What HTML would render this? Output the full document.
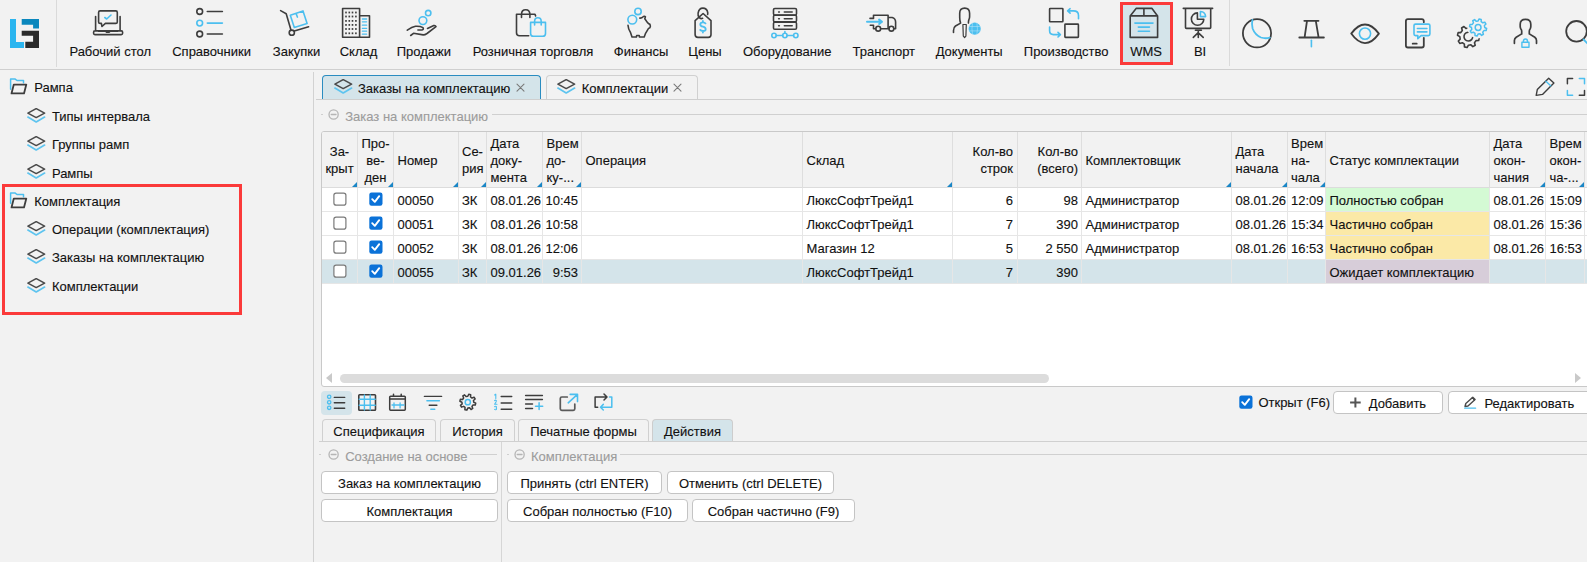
<!DOCTYPE html>
<html><head><meta charset="utf-8"><title>WMS</title>
<style>
html,body{margin:0;padding:0}
body{width:1587px;height:562px;overflow:hidden;background:#f2f2f2;font-family:"Liberation Sans",sans-serif;font-size:13px;color:#111;position:relative}
.a{position:absolute}
.t{position:absolute;white-space:nowrap;line-height:15px;-webkit-text-stroke:0.12px currentColor}
.c{text-align:center}
.r{text-align:right}
.g{color:#9c9c9c}
</style></head><body>

<div class="a" style="left:0px;top:69px;width:1587px;height:1px;background:#cfcfcf"></div>
<div class="a" style="left:56px;top:0px;width:1px;height:67px;background:#dadada"></div>
<div class="a" style="left:1229px;top:0px;width:1px;height:66px;background:#dadada"></div>
<svg class="a" style="left:10px;top:19px" width="29" height="29" viewBox="0 0 29 29">
<path d="M0 0H6V23H14V29H0Z" fill="#2bb5ef"/>
<path d="M11.7 0H29V9.6H23.1V5.7H11.7Z" fill="#0a87bd"/>
<path d="M11.7 11.7H29V29H15.3V22.8H23.1V16.7H11.7Z" fill="#2b2b2b"/>
</svg>
<div class="a" style="left:1120px;top:2px;width:53px;height:63px;background:#d4e4ea;border:3px solid #fb3a3a;box-sizing:border-box"></div>
<div class="t c " style="left:-39.8px;top:43.5px;width:300px;">Рабочий стол</div>
<div class="t c " style="left:61.599999999999994px;top:43.5px;width:300px;">Справочники</div>
<div class="t c " style="left:146.5px;top:43.5px;width:300px;">Закупки</div>
<div class="t c " style="left:208.5px;top:43.5px;width:300px;">Склад</div>
<div class="t c " style="left:273.8px;top:43.5px;width:300px;">Продажи</div>
<div class="t c " style="left:383px;top:43.5px;width:300px;">Розничная торговля</div>
<div class="t c " style="left:491.1px;top:43.5px;width:300px;">Финансы</div>
<div class="t c " style="left:555px;top:43.5px;width:300px;">Цены</div>
<div class="t c " style="left:637.2px;top:43.5px;width:300px;">Оборудование</div>
<div class="t c " style="left:733.8px;top:43.5px;width:300px;">Транспорт</div>
<div class="t c " style="left:819.2px;top:43.5px;width:300px;">Документы</div>
<div class="t c " style="left:916.2px;top:43.5px;width:300px;">Производство</div>
<div class="t c " style="left:996.0999999999999px;top:43.5px;width:300px;">WMS</div>
<div class="t c " style="left:1050.1px;top:43.5px;width:300px;">BI</div>
<svg class="a" style="left:88px;top:5px" width="40" height="35" viewBox="0 0 40 35" fill="none" stroke-linecap="round" stroke-linejoin="round"><path stroke="#3d3d3d" stroke-width="1.6" d="M12.1 5.9H27.8Q29.3 5.9 29.3 7.4V16.9Q29.3 18.4 27.8 18.4H17.4L14 21.5L13.4 18.4H12.1Q10.6 18.4 10.6 16.9V7.4Q10.6 5.9 12.1 5.9Z"/>
<path stroke="#4cbfef" stroke-width="1.6" d="M16.8 12.5L18.7 14L23 10"/>
<path stroke="#3d3d3d" stroke-width="1.6" d="M7.6 11.5V25.9M32.1 11.5V25.9M6.8 25.9H33.4Q34.6 25.9 34.6 27.2V28.3Q34.6 29.6 33.2 29.6H6.9Q5.6 29.6 5.6 28.3V27.2Q5.6 25.9 6.8 25.9ZM10.3 26.2H17.5L18.6 27.3H21.1L22.2 26.2H29.9" /></svg>
<svg class="a" style="left:190px;top:5px" width="40" height="35" viewBox="0 0 40 35" fill="none" stroke-linecap="round" stroke-linejoin="round"><circle cx="9.7" cy="6.5" r="2.9" stroke="#3d3d3d" stroke-width="1.6"/><circle cx="9.7" cy="18.1" r="2.9" stroke="#4cbfef" stroke-width="1.6"/><circle cx="9.7" cy="29" r="2.9" stroke="#3d3d3d" stroke-width="1.6"/>
<path stroke="#3d3d3d" stroke-width="1.6" d="M17.3 6.5H32.4M17.3 29H32.4"/><path stroke="#4cbfef" stroke-width="1.6" d="M17.3 18.1H32.4"/></svg>
<svg class="a" style="left:275px;top:5px" width="40" height="35" viewBox="0 0 40 35" fill="none" stroke-linecap="round" stroke-linejoin="round"><path stroke="#3d3d3d" stroke-width="1.6" d="M5.6 5.6L11.2 8.7L15.9 24.8M19.3 25.9L33.6 21.8"/><circle cx="16.8" cy="27.7" r="2.6" stroke="#3d3d3d" stroke-width="1.6"/>
<path stroke="#4cbfef" stroke-width="1.6" d="M15.3 10.3L28 5.9L32.1 18.4L19.3 22.4ZM21.2 8.7L22.4 12.1"/></svg>
<svg class="a" style="left:336px;top:5px" width="40" height="35" viewBox="0 0 40 35" fill="none" stroke-linecap="round" stroke-linejoin="round"><path stroke="#3d3d3d" stroke-width="1.6" stroke-width="1.8" d="M6.6 32.3V3.5H23.6V32.3ZM23.6 10.7H33.5V32.3H23.6"/><rect x="9.2" y="6.6" width="1.6" height="1.8" fill="#3d3d3d"/><rect x="9.2" y="10.6" width="1.6" height="1.8" fill="#3d3d3d"/><rect x="9.2" y="15.0" width="1.6" height="1.8" fill="#3d3d3d"/><rect x="9.2" y="19.0" width="1.6" height="1.8" fill="#3d3d3d"/><rect x="9.2" y="23.1" width="1.6" height="1.8" fill="#3d3d3d"/><rect x="9.2" y="27.400000000000002" width="1.6" height="1.8" fill="#3d3d3d"/><rect x="12.5" y="6.6" width="1.6" height="1.8" fill="#3d3d3d"/><rect x="12.5" y="10.6" width="1.6" height="1.8" fill="#3d3d3d"/><rect x="12.5" y="15.0" width="1.6" height="1.8" fill="#3d3d3d"/><rect x="12.5" y="19.0" width="1.6" height="1.8" fill="#3d3d3d"/><rect x="12.5" y="23.1" width="1.6" height="1.8" fill="#3d3d3d"/><rect x="12.5" y="27.400000000000002" width="1.6" height="1.8" fill="#3d3d3d"/><rect x="15.7" y="6.6" width="1.6" height="1.8" fill="#3d3d3d"/><rect x="15.7" y="10.6" width="1.6" height="1.8" fill="#3d3d3d"/><rect x="15.7" y="15.0" width="1.6" height="1.8" fill="#3d3d3d"/><rect x="15.7" y="19.0" width="1.6" height="1.8" fill="#3d3d3d"/><rect x="15.7" y="23.1" width="1.6" height="1.8" fill="#3d3d3d"/><rect x="15.7" y="27.400000000000002" width="1.6" height="1.8" fill="#3d3d3d"/><rect x="19.099999999999998" y="6.6" width="1.6" height="1.8" fill="#3d3d3d"/><rect x="19.099999999999998" y="10.6" width="1.6" height="1.8" fill="#3d3d3d"/><rect x="19.099999999999998" y="15.0" width="1.6" height="1.8" fill="#3d3d3d"/><rect x="19.099999999999998" y="19.0" width="1.6" height="1.8" fill="#3d3d3d"/><rect x="19.099999999999998" y="23.1" width="1.6" height="1.8" fill="#3d3d3d"/><rect x="19.099999999999998" y="27.400000000000002" width="1.6" height="1.8" fill="#3d3d3d"/><path stroke="#4cbfef" stroke-width="1.3" d="M26.4 14H30.6"/><path stroke="#4cbfef" stroke-width="1.3" d="M26.4 16.8H30.6"/><path stroke="#4cbfef" stroke-width="1.3" d="M26.4 20.2H30.6"/><path stroke="#4cbfef" stroke-width="1.3" d="M26.4 23.4H30.6"/><path stroke="#4cbfef" stroke-width="1.3" d="M26.4 26.2H30.6"/><path stroke="#4cbfef" stroke-width="1.3" d="M26.4 29.2H30.6"/></svg>
<svg class="a" style="left:402px;top:5px" width="40" height="35" viewBox="0 0 40 35" fill="none" stroke-linecap="round" stroke-linejoin="round"><circle cx="20.9" cy="15.6" r="3.9" stroke="#4cbfef" stroke-width="1.6"/><circle cx="26.2" cy="8.1" r="2.7" stroke="#4cbfef" stroke-width="1.6"/>
<path stroke="#3d3d3d" stroke-width="1.6" d="M5.3 25.2Q10 22 13.5 21.3Q18 21 21 22.6Q22 24.5 20 25H15.9M8.7 30.5L11.5 28.3L21.2 29.9Q23 29.9 25 28.5L34 21.6Q33.5 20.2 31.8 20.5L25.5 23.4"/></svg>
<svg class="a" style="left:510px;top:5px" width="40" height="35" viewBox="0 0 40 35" fill="none" stroke-linecap="round" stroke-linejoin="round"><path stroke="#3d3d3d" stroke-width="1.6" d="M18.7 30.8H9.5Q6.5 30.8 6.5 27.8V9.3H25L25.6 10.9M11.5 12.5V9.5Q11.5 4.7 15.7 4.7Q19.9 4.7 19.9 9.5V12.5"/>
<path stroke="#4cbfef" stroke-width="1.6" d="M20.6 17.4H35.5V28.4Q35.5 31.2 32.7 31.2H23.4Q20.6 31.2 20.6 28.4ZM24.6 20V16.4Q24.6 12.8 27.9 12.8Q31.2 12.8 31.2 16.4V20"/></svg>
<svg class="a" style="left:618px;top:5px" width="40" height="35" viewBox="0 0 40 35" fill="none" stroke-linecap="round" stroke-linejoin="round"><circle cx="14.3" cy="14.6" r="4.4" stroke="#4cbfef" stroke-width="1.6"/><circle cx="20" cy="6.4" r="3.2" stroke="#4cbfef" stroke-width="1.6"/>
<path stroke="#3d3d3d" stroke-width="1.6" d="M10 20.2Q10.3 24.5 12.5 27.4L14 32H18.4L18.7 30.5H21.2L21.5 32H26.2L27.4 28.7L30.4 23.6Q32.4 23 32.4 21.2Q32.4 19 30.6 18.6L29.3 17.4L26.8 13.7L27.4 11.8Q26.8 11 25.5 11.5Q23.6 13.3 21.8 13.1"/></svg>
<svg class="a" style="left:683px;top:5px" width="40" height="35" viewBox="0 0 40 35" fill="none" stroke-linecap="round" stroke-linejoin="round"><path stroke="#3d3d3d" stroke-width="1.6" d="M12.1 15.6V29.3Q12.1 32.4 15 32.4H25.3Q28 32.4 28 29.6V15.6L20.1 8.5Z"/>
<path stroke="#3d3d3d" stroke-width="1.6" d="M16.3 12.6Q14.6 10.8 15.1 8.1Q15.9 3.1 19.9 3.1Q23.9 3.1 24.7 7.5Q24.9 8.6 24.6 9.4M16 12Q17.4 14.4 19.6 13.3"/>
<path stroke="#4cbfef" stroke-width="1.8" d="M22.5 18.4Q21.8 17.3 20 17.3Q17.3 17.3 17.3 19.4Q17.3 21.1 20 21.7Q22.7 22.3 22.7 24.2Q22.7 26 20 26Q18 26 17.2 24.9M19.9 16V17.2M19.9 26.1V27.5"/></svg>
<svg class="a" style="left:765px;top:5px" width="40" height="35" viewBox="0 0 40 35" fill="none" stroke-linecap="round" stroke-linejoin="round"><rect x="8.5" y="3.5" width="23" height="6.6" rx="1.3" stroke="#3d3d3d" stroke-width="1.6"/><rect x="8.5" y="10.3" width="23" height="6.6" rx="1.3" stroke="#3d3d3d" stroke-width="1.6"/><rect x="8.5" y="17.3" width="23" height="7" rx="1.3" stroke="#3d3d3d" stroke-width="1.6"/>
<path stroke="#3d3d3d" stroke-width="1.5" d="M13.6 6.9H14.4M19.3 6.9H27.2M13.6 13.7H14.4M19.3 13.7H27.2M13.6 20.7H14.4M19.3 20.7H27.2"/>
<path stroke="#4cbfef" stroke-width="1.6" d="M19.9 26.5V28.3M11.3 30.5H17.7M22.1 30.5H28.5"/><circle cx="9" cy="30.5" r="2.2" stroke="#4cbfef" stroke-width="1.6"/><circle cx="19.9" cy="30.5" r="2.2" stroke="#4cbfef" stroke-width="1.6"/><circle cx="30.8" cy="30.5" r="2.2" stroke="#4cbfef" stroke-width="1.6"/></svg>
<svg class="a" style="left:861px;top:5px" width="40" height="35" viewBox="0 0 40 35" fill="none" stroke-linecap="round" stroke-linejoin="round"><path stroke="#3d3d3d" stroke-width="1.6" d="M9 13.4H12.5V10.3H27.1V23.7H20M9.3 20.2H12.5V23.7H14.6M27.1 12.5H31.2Q34.6 13.5 34.6 17V23.7H33M27.1 23.7H28"/>
<circle cx="17.2" cy="23.7" r="2.4" stroke="#3d3d3d" stroke-width="1.6"/><circle cx="30.4" cy="23.7" r="2.4" stroke="#3d3d3d" stroke-width="1.6"/>
<path stroke="#4cbfef" stroke-width="2" d="M6 16.8H20.2M18.1 14.6L21 16.8L18.1 19"/></svg>
<svg class="a" style="left:946px;top:5px" width="40" height="35" viewBox="0 0 40 35" fill="none" stroke-linecap="round" stroke-linejoin="round"><path stroke="#3d3d3d" stroke-width="1.6" d="M14.6 18.1Q13.7 16 13.7 12.5V8.3Q13.7 3.1 18.7 3.1Q23.6 3.1 23.6 8.3V11.8Q23.6 13.2 23 14.3Q22.4 15.5 22.4 18.1M14.6 18.1L9.5 21Q7.5 22.5 7.5 25.5V27.4"/>
<path stroke="#3d3d3d" stroke-width="1.2" d="M16.9 19.5H20.3L19.9 31.1L18.6 32.5L17.3 31.1Z"/>
<circle cx="28.7" cy="23.7" r="6.1" fill="#4cbfef"/><path stroke="#bfe7f9" stroke-width="0.5" d="M23 21.5H34.4M23 25.9H34.4M26.5 18Q25.3 23.7 26.5 29.4M30.9 18Q32.1 23.7 30.9 29.4"/></svg>
<svg class="a" style="left:1043px;top:5px" width="40" height="35" viewBox="0 0 40 35" fill="none" stroke-linecap="round" stroke-linejoin="round"><rect x="6.6" y="3.5" width="13.3" height="13.3" rx="0.6" stroke="#3d3d3d" stroke-width="1.6"/><rect x="21.9" y="19.1" width="13.5" height="13.3" rx="0.6" stroke="#3d3d3d" stroke-width="1.6" stroke-width="1.8"/>
<path stroke="#4cbfef" stroke-width="1.6" d="M35.5 13.7V10.4Q35.5 5.9 30.5 5.9H24.8M27.1 3.7L24.6 5.9L27.1 8.1M6.6 22.1V25.8Q6.6 29.6 10.5 29.6H17.2M15 27.4L17.4 29.6L15 32"/></svg>
<svg class="a" style="left:1124px;top:5px" width="40" height="35" viewBox="0 0 40 35" fill="none" stroke-linecap="round" stroke-linejoin="round"><path stroke="#3d3d3d" stroke-width="1.6" stroke-width="1.8" d="M6.2 10.9V32.4H33.6V10.9L28 3.4H12.1ZM6.2 10.9H33.6M19.9 3.4V10.9"/>
<path stroke="#4cbfef" stroke-width="1.6" stroke-width="1.5" d="M10.9 18.1H29M14.3 22.1H25.5M14.3 26.2H25.5"/></svg>
<svg class="a" style="left:1178px;top:5px" width="40" height="35" viewBox="0 0 40 35" fill="none" stroke-linecap="round" stroke-linejoin="round"><path stroke="#3d3d3d" stroke-width="1.6" d="M5.3 3.4H34.6M7.5 3.4V22.5Q7.5 23.4 8.4 23.4H31.8Q32.7 23.4 32.7 22.5V3.4M17.4 25.3H23.4M20.3 25.3V32.4M15.3 32.4L20.2 27.7L25.2 32.4"/>
<path stroke="#3d3d3d" stroke-width="1.6" stroke-width="1.4" d="M19.4 7.9A6.2 6.2 0 1 0 25.8 14.2H19.4Z"/>
<path stroke="#4cbfef" stroke-width="1.6" stroke-width="1.4" d="M22.4 6.5Q27.4 6.8 27.6 11.6H22.4Z"/></svg>
<svg class="a" style="left:1236px;top:14px" width="100" height="38" viewBox="0 0 100 38" fill="none" stroke-linecap="round" stroke-linejoin="round"><circle cx="21" cy="19.3" r="14.1" stroke="#3d3d3d" stroke-width="1.8"/>
<path stroke="#4cbfef" stroke-width="1.8" d="M16.4 6Q15.5 10 16.6 14.5Q19 21 25 23.5Q29.5 25 33.8 23.6"/>
<path stroke="#3d3d3d" stroke-width="1.8" d="M68.3 6.8H82.5M71 6.8L68.6 23.3M79.8 6.8L82.6 23.3M63.3 23.5H87.9"/>
<path stroke="#4cbfef" stroke-width="1.6" d="M75.4 26.3V32.8"/></svg>
<svg class="a" style="left:1340px;top:14px" width="100" height="38" viewBox="0 0 100 38" fill="none" stroke-linecap="round" stroke-linejoin="round"><path stroke="#3d3d3d" stroke-width="1.8" d="M11.2 19.6Q18 10.5 25 10.5Q32 10.5 38.9 19.6Q32 29.1 25 29.1Q18 29.1 11.2 19.6Z"/>
<circle cx="25" cy="19.6" r="5.6" stroke="#4cbfef" stroke-width="1.6"/>
<path stroke="#3d3d3d" stroke-width="1.8" d="M83.8 8.2V7.1Q83.8 5.1 81.8 5.1H67.9Q65.9 5.1 65.9 7.1V31.5Q65.9 33.5 67.9 33.5H81.8Q83.8 33.5 83.8 31.5V23.8M72.7 29.7H76.7"/>
<path stroke="#4cbfef" stroke-width="1.6" d="M75.5 10.1H88.4Q89.9 10.1 89.9 11.6V20.1Q89.9 21.6 88.4 21.6H81.1L77.8 24.7V21.6H75.5Q74 21.6 74 20.1V11.6Q74 10.1 75.5 10.1ZM77.4 14.5H86.9M77.4 17.9H86.9"/></svg>
<svg class="a" style="left:1450px;top:14px" width="137" height="38" viewBox="0 0 137 38" fill="none" stroke-linecap="round" stroke-linejoin="round"><path stroke="#3d3d3d" stroke-width="1.6" d="M27.00 22.60 L29.32 23.89 L28.66 26.57 L26.00 26.62 L24.48 28.68 L25.21 31.24 L22.85 32.66 L20.93 30.82 L18.40 31.20 L17.11 33.52 L14.43 32.86 L14.38 30.20 L12.32 28.68 L9.76 29.41 L8.34 27.05 L10.18 25.13 L9.80 22.60 L7.48 21.31 L8.14 18.63 L10.80 18.58 L12.32 16.52 L11.59 13.96 L13.95 12.54 L15.87 14.38 L18.40 14.00 L19.69 11.68 L22.37 12.34 L22.42 15.00 L24.48 16.52 L27.04 15.79 L28.46 18.15 L26.62 20.07Z"/>
<path stroke="#3d3d3d" stroke-width="1.6" d="M22.78 22.22A4.4 4.4 0 1 1 19.54 18.35"/>
<circle cx="28.1" cy="13.5" r="10.8" fill="#f2f2f2"/>
<path stroke="#4cbfef" stroke-width="1.5" d="M34.70 13.50 L36.64 14.51 L36.12 16.60 L33.93 16.59 L32.77 18.17 L33.42 20.25 L31.58 21.37 L30.04 19.81 L28.10 20.10 L27.09 22.04 L25.00 21.52 L25.01 19.33 L23.43 18.17 L21.35 18.82 L20.23 16.98 L21.79 15.44 L21.50 13.50 L19.56 12.49 L20.08 10.40 L22.27 10.41 L23.43 8.83 L22.78 6.75 L24.62 5.63 L26.16 7.19 L28.10 6.90 L29.11 4.96 L31.20 5.48 L31.19 7.67 L32.77 8.83 L34.85 8.18 L35.97 10.02 L34.41 11.56Z"/><circle cx="28.1" cy="13.5" r="2.9" stroke="#4cbfef" stroke-width="1.5"/>
<path stroke="#3d3d3d" stroke-width="1.7" d="M71.7 19.9V17.2Q71.7 16 70.9 15Q70.2 14 70.2 12.6V10.2Q70.2 5.3 75.5 5.3Q80.8 5.3 80.8 10.2V12.6Q80.8 14 80.1 15Q79.3 16 79.3 17.2V19.9L84.8 23.3Q86.5 24.6 86.5 26.5V29.3M71.7 19.9L66.2 23.3Q64.4 24.6 64.4 26.5V29.3"/>
<path stroke="#4cbfef" stroke-width="1.4" d="M71.9 28.3H79V33.2H71.9ZM73.4 28.3V27.2Q73.4 25 75.45 25Q77.5 25 77.5 27.2V28.3"/>
<circle cx="126.5" cy="17.3" r="10.3" stroke="#3d3d3d" stroke-width="1.8"/>
<path stroke="#4cbfef" stroke-width="1.8" d="M133.6 25.5L140 32"/></svg>
<div class="t " style="left:34.2px;top:79.8px;">Рампа</div>
<svg class="a" style="left:5px;top:74px" width="26" height="22" viewBox="0 0 26 22" fill="none" stroke-linecap="round" stroke-linejoin="round"><path stroke="#4cbfef" stroke-width="1.5" d="M5.6 15.3V5.1H10.2L12 6.5H18.5V8.8"/>
<path stroke="#3d3d3d" stroke-width="1.8" d="M8.8 10.6H21.3L19 19.4H6.5Z" fill="#f2f2f2"/></svg>
<div class="t " style="left:51.9px;top:108.8px;">Типы интервала</div>
<svg class="a" style="left:26.8px;top:107.8px" width="20" height="16" viewBox="0 0 20 16" fill="none" stroke-linecap="round" stroke-linejoin="round"><path stroke="#4a4a4a" stroke-width="1.5" d="M0.9 5.1L9.2 0.6L17.6 5.1L9.2 9.6Z"/>
<path stroke="#5ec4ef" stroke-width="1.7" d="M0.9 9.1L9.2 14L17.6 9.1"/></svg>
<div class="t " style="left:51.9px;top:137.1px;">Группы рамп</div>
<svg class="a" style="left:26.8px;top:136.13px" width="20" height="16" viewBox="0 0 20 16" fill="none" stroke-linecap="round" stroke-linejoin="round"><path stroke="#4a4a4a" stroke-width="1.5" d="M0.9 5.1L9.2 0.6L17.6 5.1L9.2 9.6Z"/>
<path stroke="#5ec4ef" stroke-width="1.7" d="M0.9 9.1L9.2 14L17.6 9.1"/></svg>
<div class="t " style="left:51.9px;top:165.5px;">Рампы</div>
<svg class="a" style="left:26.8px;top:164.45999999999998px" width="20" height="16" viewBox="0 0 20 16" fill="none" stroke-linecap="round" stroke-linejoin="round"><path stroke="#4a4a4a" stroke-width="1.5" d="M0.9 5.1L9.2 0.6L17.6 5.1L9.2 9.6Z"/>
<path stroke="#5ec4ef" stroke-width="1.7" d="M0.9 9.1L9.2 14L17.6 9.1"/></svg>
<div class="t " style="left:34.2px;top:193.8px;">Комплектация</div>
<svg class="a" style="left:5px;top:188px" width="26" height="22" viewBox="0 0 26 22" fill="none" stroke-linecap="round" stroke-linejoin="round"><path stroke="#4cbfef" stroke-width="1.5" d="M5.6 15.3V5.1H10.2L12 6.5H18.5V8.8"/>
<path stroke="#3d3d3d" stroke-width="1.8" d="M8.8 10.6H21.3L19 19.4H6.5Z" fill="#f2f2f2"/></svg>
<div class="t " style="left:51.9px;top:222.1px;">Операции (комплектация)</div>
<svg class="a" style="left:26.8px;top:221.12px" width="20" height="16" viewBox="0 0 20 16" fill="none" stroke-linecap="round" stroke-linejoin="round"><path stroke="#4a4a4a" stroke-width="1.5" d="M0.9 5.1L9.2 0.6L17.6 5.1L9.2 9.6Z"/>
<path stroke="#5ec4ef" stroke-width="1.7" d="M0.9 9.1L9.2 14L17.6 9.1"/></svg>
<div class="t " style="left:51.9px;top:250.4px;">Заказы на комплектацию</div>
<svg class="a" style="left:26.8px;top:249.45px" width="20" height="16" viewBox="0 0 20 16" fill="none" stroke-linecap="round" stroke-linejoin="round"><path stroke="#4a4a4a" stroke-width="1.5" d="M0.9 5.1L9.2 0.6L17.6 5.1L9.2 9.6Z"/>
<path stroke="#5ec4ef" stroke-width="1.7" d="M0.9 9.1L9.2 14L17.6 9.1"/></svg>
<div class="t " style="left:51.9px;top:278.8px;">Комплектации</div>
<svg class="a" style="left:26.8px;top:277.78px" width="20" height="16" viewBox="0 0 20 16" fill="none" stroke-linecap="round" stroke-linejoin="round"><path stroke="#4a4a4a" stroke-width="1.5" d="M0.9 5.1L9.2 0.6L17.6 5.1L9.2 9.6Z"/>
<path stroke="#5ec4ef" stroke-width="1.7" d="M0.9 9.1L9.2 14L17.6 9.1"/></svg>
<div class="a" style="left:2px;top:184px;width:240px;height:131px;border:3px solid #fb3a3a;box-sizing:border-box"></div>
<div class="a" style="left:313px;top:72px;width:1px;height:490px;background:#d2d2d2"></div>
<div class="a" style="left:322px;top:75px;width:219px;height:24px;background:#d4e4ea;border:1px solid #2a8cc0;border-bottom:none;border-radius:4px 4px 0 0;box-sizing:border-box"></div>
<div class="a" style="left:546px;top:75px;width:152px;height:24px;background:#f2f2f2;border:1px solid #d0d0d0;border-bottom:none;border-radius:4px 4px 0 0;box-sizing:border-box"></div>
<div class="a" style="left:316px;top:99px;width:1271px;height:1px;background:#cfcfcf"></div>
<svg class="a" style="left:334px;top:79px" width="20" height="16" viewBox="0 0 20 16" fill="none" stroke-linecap="round" stroke-linejoin="round"><path stroke="#4a4a4a" stroke-width="1.5" d="M0.9 5.1L9.2 0.6L17.6 5.1L9.2 9.6Z"/>
<path stroke="#5ec4ef" stroke-width="1.7" d="M0.9 9.1L9.2 14L17.6 9.1"/></svg>
<div class="t " style="left:358px;top:80.7px;">Заказы на комплектацию</div>
<svg class="a" style="left:516px;top:83px" width="10" height="10" viewBox="0 0 10 10" fill="none" stroke-linecap="round" stroke-linejoin="round"><path stroke="#7a7a7a" stroke-width="1.1" d="M1 1.2L8 8.2M8 1.2L1 8.2"/></svg>
<svg class="a" style="left:557px;top:79px" width="20" height="16" viewBox="0 0 20 16" fill="none" stroke-linecap="round" stroke-linejoin="round"><path stroke="#4a4a4a" stroke-width="1.5" d="M0.9 5.1L9.2 0.6L17.6 5.1L9.2 9.6Z"/>
<path stroke="#5ec4ef" stroke-width="1.7" d="M0.9 9.1L9.2 14L17.6 9.1"/></svg>
<div class="t " style="left:581.8px;top:80.7px;">Комплектации</div>
<svg class="a" style="left:673px;top:83px" width="10" height="10" viewBox="0 0 10 10" fill="none" stroke-linecap="round" stroke-linejoin="round"><path stroke="#7a7a7a" stroke-width="1.1" d="M1 1.2L8 8.2M8 1.2L1 8.2"/></svg>
<svg class="a" style="left:1527px;top:72px" width="60" height="28" viewBox="0 0 60 28" fill="none" stroke-linecap="round" stroke-linejoin="round"><path stroke="#3d3d3d" stroke-width="1.4" d="M9.2 23.4L10.3 17.6L21.7 6.2L26.9 11L15.5 22.4Z"/>
<path stroke="#4cbfef" stroke-width="1.4" d="M18.9 9.2L23.7 13.7"/>
<path stroke="#3d3d3d" stroke-width="1.5" d="M40.4 11.7V6.5H45.6M52.3 23.2H57.5V18.4"/>
<path stroke="#4cbfef" stroke-width="1.5" d="M52.3 6.5H57.5V11.7M40.4 18.4V23.2H45.6"/></svg>
<div class="a" style="left:321px;top:114px;width:2px;height:1px;background:#cfcfcf"></div>
<svg class="a" style="left:327.5px;top:109px" width="12" height="12" viewBox="0 0 12 12" fill="none" stroke-linecap="round" stroke-linejoin="round"><circle cx="5.6" cy="5.5" r="4.6" stroke="#b5b5b5" stroke-width="1.3"/><path stroke="#b5b5b5" stroke-width="1.3" d="M3.2 5.5H8"/></svg>
<div class="t g" style="left:345.2px;top:109.0px;">Заказ на комплектацию</div>
<div class="a" style="left:492px;top:114px;width:1095px;height:1px;background:#d0d0d0"></div>
<div class="a" style="left:321px;top:131px;width:1272px;height:256px;background:#fff;border:1px solid #c9c9c9;border-radius:3px;box-sizing:border-box"></div>
<div class="a" style="left:322px;top:132px;width:1266px;height:56px;background:#f2f2f2;border-radius:2px 0 0 0"></div>
<div class="a" style="left:322px;top:187px;width:1266px;height:1px;background:#dcdcdc"></div>
<div class="a" style="left:322px;top:260px;width:1266px;height:24px;background:#d4e4ea"></div>
<div class="a" style="left:357px;top:132px;width:1px;height:56px;background:#dedede"></div>
<div class="a" style="left:357px;top:188px;width:1px;height:96px;background:#e6e6e6"></div>
<div class="a" style="left:393px;top:132px;width:1px;height:56px;background:#dedede"></div>
<div class="a" style="left:393px;top:188px;width:1px;height:96px;background:#e6e6e6"></div>
<div class="a" style="left:458px;top:132px;width:1px;height:56px;background:#dedede"></div>
<div class="a" style="left:458px;top:188px;width:1px;height:96px;background:#e6e6e6"></div>
<div class="a" style="left:486px;top:132px;width:1px;height:56px;background:#dedede"></div>
<div class="a" style="left:486px;top:188px;width:1px;height:96px;background:#e6e6e6"></div>
<div class="a" style="left:542px;top:132px;width:1px;height:56px;background:#dedede"></div>
<div class="a" style="left:542px;top:188px;width:1px;height:96px;background:#e6e6e6"></div>
<div class="a" style="left:581px;top:132px;width:1px;height:56px;background:#dedede"></div>
<div class="a" style="left:581px;top:188px;width:1px;height:96px;background:#e6e6e6"></div>
<div class="a" style="left:802px;top:132px;width:1px;height:56px;background:#dedede"></div>
<div class="a" style="left:802px;top:188px;width:1px;height:96px;background:#e6e6e6"></div>
<div class="a" style="left:952px;top:132px;width:1px;height:56px;background:#dedede"></div>
<div class="a" style="left:952px;top:188px;width:1px;height:96px;background:#e6e6e6"></div>
<div class="a" style="left:1017px;top:132px;width:1px;height:56px;background:#dedede"></div>
<div class="a" style="left:1017px;top:188px;width:1px;height:96px;background:#e6e6e6"></div>
<div class="a" style="left:1081px;top:132px;width:1px;height:56px;background:#dedede"></div>
<div class="a" style="left:1081px;top:188px;width:1px;height:96px;background:#e6e6e6"></div>
<div class="a" style="left:1231px;top:132px;width:1px;height:56px;background:#dedede"></div>
<div class="a" style="left:1231px;top:188px;width:1px;height:96px;background:#e6e6e6"></div>
<div class="a" style="left:1287px;top:132px;width:1px;height:56px;background:#dedede"></div>
<div class="a" style="left:1287px;top:188px;width:1px;height:96px;background:#e6e6e6"></div>
<div class="a" style="left:1325px;top:132px;width:1px;height:56px;background:#dedede"></div>
<div class="a" style="left:1325px;top:188px;width:1px;height:96px;background:#e6e6e6"></div>
<div class="a" style="left:1489px;top:132px;width:1px;height:56px;background:#dedede"></div>
<div class="a" style="left:1489px;top:188px;width:1px;height:96px;background:#e6e6e6"></div>
<div class="a" style="left:1545px;top:132px;width:1px;height:56px;background:#dedede"></div>
<div class="a" style="left:1545px;top:188px;width:1px;height:96px;background:#e6e6e6"></div>
<div class="a" style="left:1584px;top:132px;width:1px;height:56px;background:#dedede"></div>
<div class="a" style="left:1584px;top:188px;width:1px;height:96px;background:#e6e6e6"></div>
<svg class="a" style="left:352px;top:182px" width="5" height="5" viewBox="0 0 5 5" fill="none" stroke-linecap="round" stroke-linejoin="round"><path d="M5 0V5H0Z" fill="#1a86c6"/></svg>
<svg class="a" style="left:388px;top:182px" width="5" height="5" viewBox="0 0 5 5" fill="none" stroke-linecap="round" stroke-linejoin="round"><path d="M5 0V5H0Z" fill="#1a86c6"/></svg>
<svg class="a" style="left:453px;top:182px" width="5" height="5" viewBox="0 0 5 5" fill="none" stroke-linecap="round" stroke-linejoin="round"><path d="M5 0V5H0Z" fill="#1a86c6"/></svg>
<svg class="a" style="left:481px;top:182px" width="5" height="5" viewBox="0 0 5 5" fill="none" stroke-linecap="round" stroke-linejoin="round"><path d="M5 0V5H0Z" fill="#1a86c6"/></svg>
<svg class="a" style="left:537px;top:182px" width="5" height="5" viewBox="0 0 5 5" fill="none" stroke-linecap="round" stroke-linejoin="round"><path d="M5 0V5H0Z" fill="#1a86c6"/></svg>
<svg class="a" style="left:576px;top:182px" width="5" height="5" viewBox="0 0 5 5" fill="none" stroke-linecap="round" stroke-linejoin="round"><path d="M5 0V5H0Z" fill="#1a86c6"/></svg>
<svg class="a" style="left:947px;top:182px" width="5" height="5" viewBox="0 0 5 5" fill="none" stroke-linecap="round" stroke-linejoin="round"><path d="M5 0V5H0Z" fill="#1a86c6"/></svg>
<svg class="a" style="left:1226px;top:182px" width="5" height="5" viewBox="0 0 5 5" fill="none" stroke-linecap="round" stroke-linejoin="round"><path d="M5 0V5H0Z" fill="#1a86c6"/></svg>
<svg class="a" style="left:1282px;top:182px" width="5" height="5" viewBox="0 0 5 5" fill="none" stroke-linecap="round" stroke-linejoin="round"><path d="M5 0V5H0Z" fill="#1a86c6"/></svg>
<svg class="a" style="left:1320px;top:182px" width="5" height="5" viewBox="0 0 5 5" fill="none" stroke-linecap="round" stroke-linejoin="round"><path d="M5 0V5H0Z" fill="#1a86c6"/></svg>
<svg class="a" style="left:1540px;top:182px" width="5" height="5" viewBox="0 0 5 5" fill="none" stroke-linecap="round" stroke-linejoin="round"><path d="M5 0V5H0Z" fill="#1a86c6"/></svg>
<svg class="a" style="left:1579px;top:182px" width="5" height="5" viewBox="0 0 5 5" fill="none" stroke-linecap="round" stroke-linejoin="round"><path d="M5 0V5H0Z" fill="#1a86c6"/></svg>
<div class="a" style="left:322px;top:211px;width:1266px;height:1px;background:#e6e6e6"></div>
<div class="a" style="left:322px;top:235px;width:1266px;height:1px;background:#e6e6e6"></div>
<div class="a" style="left:322px;top:259px;width:1266px;height:1px;background:#e6e6e6"></div>
<div class="a" style="left:322px;top:283px;width:1266px;height:1px;background:#e6e6e6"></div>
<div class="a" style="left:1326px;top:188px;width:163px;height:23px;background:#d4fad4"></div>
<div class="a" style="left:1326px;top:212px;width:163px;height:23px;background:#fbe9a7"></div>
<div class="a" style="left:1326px;top:236px;width:163px;height:23px;background:#fbe9a7"></div>
<div class="a" style="left:1326px;top:260px;width:163px;height:23px;background:#d7cdd9"></div>
<div class="t c " style="left:189.5px;top:143.9px;width:300px;">За-</div>
<div class="t c " style="left:189.5px;top:160.9px;width:300px;">крыт</div>
<div class="t c " style="left:225.5px;top:135.9px;width:300px;">Про-</div>
<div class="t c " style="left:225.5px;top:152.9px;width:300px;">ве-</div>
<div class="t c " style="left:225.5px;top:169.9px;width:300px;">ден</div>
<div class="t " style="left:397.5px;top:152.7px;">Номер</div>
<div class="t " style="left:462px;top:143.9px;">Се-</div>
<div class="t " style="left:462px;top:160.9px;">рия</div>
<div class="t " style="left:490.5px;top:135.9px;">Дата</div>
<div class="t " style="left:490.5px;top:152.9px;">доку-</div>
<div class="t " style="left:490.5px;top:169.9px;">мента</div>
<div class="t " style="left:546.5px;top:135.9px;">Врем</div>
<div class="t " style="left:546.5px;top:152.9px;">до-</div>
<div class="t " style="left:546.5px;top:169.9px;">ку-...</div>
<div class="t " style="left:585.5px;top:152.7px;">Операция</div>
<div class="t " style="left:806.5px;top:152.7px;">Склад</div>
<div class="t r " style="left:713px;top:143.9px;width:300px;">Кол-во</div>
<div class="t r " style="left:713px;top:160.9px;width:300px;">строк</div>
<div class="t r " style="left:778px;top:143.9px;width:300px;">Кол-во</div>
<div class="t r " style="left:778px;top:160.9px;width:300px;">(всего)</div>
<div class="t " style="left:1085.5px;top:152.7px;">Комплектовщик</div>
<div class="t " style="left:1235.5px;top:143.9px;">Дата</div>
<div class="t " style="left:1235.5px;top:160.9px;">начала</div>
<div class="t " style="left:1291px;top:135.9px;">Врем</div>
<div class="t " style="left:1291px;top:152.9px;">на-</div>
<div class="t " style="left:1291px;top:169.9px;">чала</div>
<div class="t " style="left:1329.5px;top:152.7px;">Статус комплектации</div>
<div class="t " style="left:1493.5px;top:135.9px;">Дата</div>
<div class="t " style="left:1493.5px;top:152.9px;">окон-</div>
<div class="t " style="left:1493.5px;top:169.9px;">чания</div>
<div class="t " style="left:1549.5px;top:135.9px;">Врем</div>
<div class="t " style="left:1549.5px;top:152.9px;">окон-</div>
<div class="t " style="left:1549.5px;top:169.9px;">ча-...</div>
<svg class="a" style="left:333px;top:192px" width="14" height="14" viewBox="0 0 14 14" fill="none" stroke-linecap="round" stroke-linejoin="round"><rect x="0.9" y="1.1" width="12" height="12" rx="2.2" stroke="#7a7a7a" stroke-width="1.2" fill="#fff"/></svg>
<svg class="a" style="left:369px;top:192px" width="14" height="14" viewBox="0 0 14 14" fill="none" stroke-linecap="round" stroke-linejoin="round"><rect x="0.3" y="0.5" width="13.2" height="13.2" rx="2.2" fill="#0b72d8"/><path stroke="#fff" stroke-width="1.9" d="M3.2 7.2L5.8 9.8L10.2 4.2"/></svg>
<div class="t " style="left:397.5px;top:193.2px;">00050</div>
<div class="t " style="left:462px;top:193.2px;">ЗК</div>
<div class="t " style="left:490.5px;top:193.2px;">08.01.26</div>
<div class="t r " style="left:278px;top:193.2px;width:300px;">10:45</div>
<div class="t " style="left:806.5px;top:193.2px;">ЛюксСофтТрейд1</div>
<div class="t r " style="left:713px;top:193.2px;width:300px;">6</div>
<div class="t r " style="left:778px;top:193.2px;width:300px;">98</div>
<div class="t " style="left:1085.5px;top:193.2px;">Администратор</div>
<div class="t " style="left:1235.5px;top:193.2px;">08.01.26</div>
<div class="t " style="left:1291px;top:193.2px;">12:09</div>
<div class="t " style="left:1329.5px;top:193.2px;">Полностью собран</div>
<div class="t " style="left:1493.5px;top:193.2px;">08.01.26</div>
<div class="t " style="left:1549.5px;top:193.2px;">15:09</div>
<svg class="a" style="left:333px;top:216px" width="14" height="14" viewBox="0 0 14 14" fill="none" stroke-linecap="round" stroke-linejoin="round"><rect x="0.9" y="1.1" width="12" height="12" rx="2.2" stroke="#7a7a7a" stroke-width="1.2" fill="#fff"/></svg>
<svg class="a" style="left:369px;top:216px" width="14" height="14" viewBox="0 0 14 14" fill="none" stroke-linecap="round" stroke-linejoin="round"><rect x="0.3" y="0.5" width="13.2" height="13.2" rx="2.2" fill="#0b72d8"/><path stroke="#fff" stroke-width="1.9" d="M3.2 7.2L5.8 9.8L10.2 4.2"/></svg>
<div class="t " style="left:397.5px;top:217.2px;">00051</div>
<div class="t " style="left:462px;top:217.2px;">ЗК</div>
<div class="t " style="left:490.5px;top:217.2px;">08.01.26</div>
<div class="t r " style="left:278px;top:217.2px;width:300px;">10:58</div>
<div class="t " style="left:806.5px;top:217.2px;">ЛюксСофтТрейд1</div>
<div class="t r " style="left:713px;top:217.2px;width:300px;">7</div>
<div class="t r " style="left:778px;top:217.2px;width:300px;">390</div>
<div class="t " style="left:1085.5px;top:217.2px;">Администратор</div>
<div class="t " style="left:1235.5px;top:217.2px;">08.01.26</div>
<div class="t " style="left:1291px;top:217.2px;">15:34</div>
<div class="t " style="left:1329.5px;top:217.2px;">Частично собран</div>
<div class="t " style="left:1493.5px;top:217.2px;">08.01.26</div>
<div class="t " style="left:1549.5px;top:217.2px;">15:36</div>
<svg class="a" style="left:333px;top:240px" width="14" height="14" viewBox="0 0 14 14" fill="none" stroke-linecap="round" stroke-linejoin="round"><rect x="0.9" y="1.1" width="12" height="12" rx="2.2" stroke="#7a7a7a" stroke-width="1.2" fill="#fff"/></svg>
<svg class="a" style="left:369px;top:240px" width="14" height="14" viewBox="0 0 14 14" fill="none" stroke-linecap="round" stroke-linejoin="round"><rect x="0.3" y="0.5" width="13.2" height="13.2" rx="2.2" fill="#0b72d8"/><path stroke="#fff" stroke-width="1.9" d="M3.2 7.2L5.8 9.8L10.2 4.2"/></svg>
<div class="t " style="left:397.5px;top:241.2px;">00052</div>
<div class="t " style="left:462px;top:241.2px;">ЗК</div>
<div class="t " style="left:490.5px;top:241.2px;">08.01.26</div>
<div class="t r " style="left:278px;top:241.2px;width:300px;">12:06</div>
<div class="t " style="left:806.5px;top:241.2px;">Магазин 12</div>
<div class="t r " style="left:713px;top:241.2px;width:300px;">5</div>
<div class="t r " style="left:778px;top:241.2px;width:300px;">2 550</div>
<div class="t " style="left:1085.5px;top:241.2px;">Администратор</div>
<div class="t " style="left:1235.5px;top:241.2px;">08.01.26</div>
<div class="t " style="left:1291px;top:241.2px;">16:53</div>
<div class="t " style="left:1329.5px;top:241.2px;">Частично собран</div>
<div class="t " style="left:1493.5px;top:241.2px;">08.01.26</div>
<div class="t " style="left:1549.5px;top:241.2px;">16:53</div>
<svg class="a" style="left:333px;top:264px" width="14" height="14" viewBox="0 0 14 14" fill="none" stroke-linecap="round" stroke-linejoin="round"><rect x="0.9" y="1.1" width="12" height="12" rx="2.2" stroke="#7a7a7a" stroke-width="1.2" fill="#fff"/></svg>
<svg class="a" style="left:369px;top:264px" width="14" height="14" viewBox="0 0 14 14" fill="none" stroke-linecap="round" stroke-linejoin="round"><rect x="0.3" y="0.5" width="13.2" height="13.2" rx="2.2" fill="#0b72d8"/><path stroke="#fff" stroke-width="1.9" d="M3.2 7.2L5.8 9.8L10.2 4.2"/></svg>
<div class="t " style="left:397.5px;top:265.2px;">00055</div>
<div class="t " style="left:462px;top:265.2px;">ЗК</div>
<div class="t " style="left:490.5px;top:265.2px;">09.01.26</div>
<div class="t r " style="left:278px;top:265.2px;width:300px;">9:53</div>
<div class="t " style="left:806.5px;top:265.2px;">ЛюксСофтТрейд1</div>
<div class="t r " style="left:713px;top:265.2px;width:300px;">7</div>
<div class="t r " style="left:778px;top:265.2px;width:300px;">390</div>
<div class="t " style="left:1085.5px;top:265.2px;"></div>
<div class="t " style="left:1235.5px;top:265.2px;"></div>
<div class="t " style="left:1291px;top:265.2px;"></div>
<div class="t " style="left:1329.5px;top:265.2px;">Ожидает комплектацию</div>
<div class="t " style="left:1493.5px;top:265.2px;"></div>
<div class="t " style="left:1549.5px;top:265.2px;"></div>
<svg class="a" style="left:326px;top:373px" width="7" height="10" viewBox="0 0 7 10" fill="none" stroke-linecap="round" stroke-linejoin="round"><path d="M6 0V10L0 5Z" fill="#c9c9c9"/></svg>
<div class="a" style="left:340px;top:374px;width:709px;height:9px;background:#dcdcdc;border-radius:5px"></div>
<svg class="a" style="left:1575px;top:373px" width="7" height="10" viewBox="0 0 7 10" fill="none" stroke-linecap="round" stroke-linejoin="round"><path d="M0 0V10L6 5Z" fill="#c9c9c9"/></svg>
<div class="a" style="left:321px;top:391px;width:31px;height:24px;background:#d4e4ea;border-radius:4px"></div>
<svg class="a" style="left:321px;top:385px" width="300" height="35" viewBox="0 0 300 35" fill="none" stroke-linecap="round" stroke-linejoin="round">
<circle cx="8.2" cy="11.8" r="1.7" stroke="#4cbfef" stroke-width="1.3"/><circle cx="8.2" cy="17.3" r="1.7" stroke="#4cbfef" stroke-width="1.3"/><circle cx="8.2" cy="22.8" r="1.7" stroke="#4cbfef" stroke-width="1.3"/>
<path stroke="#3d3d3d" stroke-width="1.4" d="M13.3 12.4H23.7M13.3 17.8H23.7M13.3 23.2H23.7"/>
<rect x="37.8" y="9.7" width="16.7" height="15.5" rx="0.8" stroke="#3d3d3d" stroke-width="1.6"/>
<path stroke="#4cbfef" stroke-width="1.4" d="M43.4 10V25M49.2 10V25M38.2 14.3H54.2M38.2 20.2H54.2"/>
<path stroke="#3d3d3d" stroke-width="1.5" d="M69.6 11.2H83.4Q84.3 11.2 84.3 12.1V24.3Q84.3 25.2 83.4 25.2H69.6Q68.7 25.2 68.7 24.3V12.1Q68.7 11.2 69.6 11.2ZM68.7 14H84.3M72.5 11.2V9.2M80.2 11.2V9.2"/>
<path stroke="#4cbfef" stroke-width="1.3" d="M71 20H83M73 17.8V22.9M79.1 17.8V22.9"/>
<path stroke="#3d3d3d" stroke-width="1.4" d="M103.4 11.4H120.6M108.2 20.2H115.9"/>
<path stroke="#4cbfef" stroke-width="1.4" d="M105.9 15.8H118.4M109.8 24.3H113.8"/>
</svg>
<svg class="a" style="left:459px;top:393px" width="19" height="19" viewBox="0 0 19 19" fill="none" stroke-linecap="round" stroke-linejoin="round"><path stroke="#3d3d3d" stroke-width="1.5" d="M14.70 9.20 L16.74 10.14 L16.26 12.09 L14.01 11.96 L12.97 13.37 L13.75 15.48 L12.03 16.52 L10.53 14.84 L8.80 15.10 L7.86 17.14 L5.91 16.66 L6.04 14.41 L4.63 13.37 L2.52 14.15 L1.48 12.43 L3.16 10.93 L2.90 9.20 L0.86 8.26 L1.34 6.31 L3.59 6.44 L4.63 5.03 L3.85 2.92 L5.57 1.88 L7.07 3.56 L8.80 3.30 L9.74 1.26 L11.69 1.74 L11.56 3.99 L12.97 5.03 L15.08 4.25 L16.12 5.97 L14.44 7.47Z"/><circle cx="8.8" cy="9.2" r="2.6" stroke="#4cbfef" stroke-width="1.5"/></svg>
<svg class="a" style="left:490px;top:385px" width="130" height="35" viewBox="0 0 130 35" fill="none" stroke-linecap="round" stroke-linejoin="round">
<path stroke="#4cbfef" stroke-width="1.1" d="M4.6 10L5.8 9.2V13.5M4.6 15.6Q5.2 14.9 6 15.2Q6.8 15.8 6 17L4.6 19.3H7M4.6 21.7Q5.3 21 6.2 21.4Q6.9 22 6.1 23.1Q7 23.7 6.2 24.5Q5.3 25 4.6 24.4"/>
<path stroke="#3d3d3d" stroke-width="1.5" d="M11.2 11.5H21.7M11.2 17.9H21.7M11.2 24.3H21.7"/>
<path stroke="#3d3d3d" stroke-width="1.5" d="M35.6 10.5H52.4M35.6 14.6H52.4M35.6 19H42.5M35.6 23.4H42.5"/>
<path stroke="#4cbfef" stroke-width="1.5" d="M45.5 21.2H52.7M49.1 17.7V24.6"/>
<path stroke="#5a5a5a" stroke-width="1.7" d="M77.3 12H71.8Q70.3 12 70.3 13.5V23.8Q70.3 25.3 71.8 25.3H83.3Q84.8 25.3 84.8 23.8V19"/>
<path stroke="#4cbfef" stroke-width="1.6" d="M78.2 17.8L87.2 9.6M80.2 9.4H87.5V16.6"/>
<path stroke="#3d3d3d" stroke-width="1.5" d="M107.7 22.2H105.1V12H116.8M114 9L117 12L114 15"/>
<path stroke="#4cbfef" stroke-width="1.5" d="M119.5 12H121.8V22.2H110.6M113.3 19.4L110.5 22.2L113.3 25"/>
</svg>
<svg class="a" style="left:1239px;top:395px" width="14" height="14" viewBox="0 0 14 14" fill="none" stroke-linecap="round" stroke-linejoin="round"><rect x="0.3" y="0.5" width="13.2" height="13.2" rx="2.2" fill="#0b72d8"/><path stroke="#fff" stroke-width="1.9" d="M3.2 7.2L5.8 9.8L10.2 4.2"/></svg>
<div class="t " style="left:1258.4px;top:395.2px;">Открыт (F6)</div>
<div class="a" style="left:1333px;top:391px;width:110px;height:23px;background:#fff;border:1px solid #c4c4c4;border-radius:4px;box-sizing:border-box"></div>
<svg class="a" style="left:1349px;top:396px" width="13" height="13" viewBox="0 0 13 13" fill="none" stroke-linecap="round" stroke-linejoin="round"><path stroke="#555" stroke-width="2" stroke-linecap="butt" d="M6.4 1.5V11.6M1.1 6.6H11.7"/></svg>
<div class="t " style="left:1368.7px;top:395.5px;">Добавить</div>
<div class="a" style="left:1448px;top:391px;width:145px;height:23px;background:#fff;border:1px solid #c4c4c4;border-radius:4px;box-sizing:border-box"></div>
<svg class="a" style="left:1462px;top:394px" width="16" height="17" viewBox="0 0 16 17" fill="none" stroke-linecap="round" stroke-linejoin="round"><path stroke="#4a4a4a" stroke-width="1.4" d="M3 12.5L3.8 9.5L10.8 3.2L13.1 5.4L6 12Z"/><path stroke="#4a4a4a" stroke-width="1" d="M10 4L12.3 6.2"/><path stroke="#4cbfef" stroke-width="1.3" d="M2.7 14.2H13.6"/></svg>
<div class="t " style="left:1484.4px;top:395.5px;">Редактировать</div>
<div class="a" style="left:322px;top:419px;width:114px;height:22px;background:#f2f2f2;border:1px solid #d0d0d0;border-bottom:none;border-radius:4px 4px 0 0;box-sizing:border-box"></div>
<div class="t c " style="left:229.0px;top:424.2px;width:300px;">Спецификация</div>
<div class="a" style="left:440px;top:419px;width:75px;height:22px;background:#f2f2f2;border:1px solid #d0d0d0;border-bottom:none;border-radius:4px 4px 0 0;box-sizing:border-box"></div>
<div class="t c " style="left:327.5px;top:424.2px;width:300px;">История</div>
<div class="a" style="left:518px;top:419px;width:131px;height:22px;background:#f2f2f2;border:1px solid #d0d0d0;border-bottom:none;border-radius:4px 4px 0 0;box-sizing:border-box"></div>
<div class="t c " style="left:433.5px;top:424.2px;width:300px;">Печатные формы</div>
<div class="a" style="left:652px;top:419px;width:81px;height:22px;background:#d4e4ea;border:1px solid #cdcdcd;border-bottom:none;border-radius:4px 4px 0 0;box-sizing:border-box"></div>
<div class="t c " style="left:542.5px;top:424.2px;width:300px;">Действия</div>
<div class="a" style="left:319px;top:441px;width:1268px;height:1px;background:#d0d0d0"></div>
<div class="a" style="left:501px;top:442px;width:1px;height:120px;background:#d6d6d6"></div>
<div class="a" style="left:319px;top:454px;width:2px;height:1px;background:#cfcfcf"></div>
<svg class="a" style="left:327.5px;top:449px" width="12" height="12" viewBox="0 0 12 12" fill="none" stroke-linecap="round" stroke-linejoin="round"><circle cx="5.6" cy="5.5" r="4.6" stroke="#b5b5b5" stroke-width="1.3"/><path stroke="#b5b5b5" stroke-width="1.3" d="M3.2 5.5H8"/></svg>
<div class="t g" style="left:345.2px;top:449.0px;">Создание на основе</div>
<div class="a" style="left:470px;top:454px;width:27px;height:1px;background:#d0d0d0"></div>
<div class="a" style="left:507px;top:454px;width:2px;height:1px;background:#cfcfcf"></div>
<svg class="a" style="left:513.5px;top:449px" width="12" height="12" viewBox="0 0 12 12" fill="none" stroke-linecap="round" stroke-linejoin="round"><circle cx="5.6" cy="5.5" r="4.6" stroke="#b5b5b5" stroke-width="1.3"/><path stroke="#b5b5b5" stroke-width="1.3" d="M3.2 5.5H8"/></svg>
<div class="t g" style="left:531px;top:449.0px;">Комплектация</div>
<div class="a" style="left:620px;top:454px;width:967px;height:1px;background:#d0d0d0"></div>
<div class="a" style="left:321px;top:471px;width:177px;height:23px;background:#fff;border:1px solid #c4c4c4;border-radius:4px;box-sizing:border-box"></div>
<div class="t c " style="left:259.5px;top:475.7px;width:300px;">Заказ на комплектацию</div>
<div class="a" style="left:321px;top:499px;width:177px;height:23px;background:#fff;border:1px solid #c4c4c4;border-radius:4px;box-sizing:border-box"></div>
<div class="t c " style="left:259.5px;top:503.7px;width:300px;">Комплектация</div>
<div class="a" style="left:507px;top:471px;width:155px;height:23px;background:#fff;border:1px solid #c4c4c4;border-radius:4px;box-sizing:border-box"></div>
<div class="t c " style="left:434.5px;top:475.7px;width:300px;">Принять (ctrl ENTER)</div>
<div class="a" style="left:667px;top:471px;width:167px;height:23px;background:#fff;border:1px solid #c4c4c4;border-radius:4px;box-sizing:border-box"></div>
<div class="t c " style="left:600.5px;top:475.7px;width:300px;">Отменить (ctrl DELETE)</div>
<div class="a" style="left:507px;top:499px;width:181px;height:23px;background:#fff;border:1px solid #c4c4c4;border-radius:4px;box-sizing:border-box"></div>
<div class="t c " style="left:447.5px;top:503.7px;width:300px;">Собран полностью (F10)</div>
<div class="a" style="left:692px;top:499px;width:163px;height:23px;background:#fff;border:1px solid #c4c4c4;border-radius:4px;box-sizing:border-box"></div>
<div class="t c " style="left:623.5px;top:503.7px;width:300px;">Собран частично (F9)</div>
</body></html>
